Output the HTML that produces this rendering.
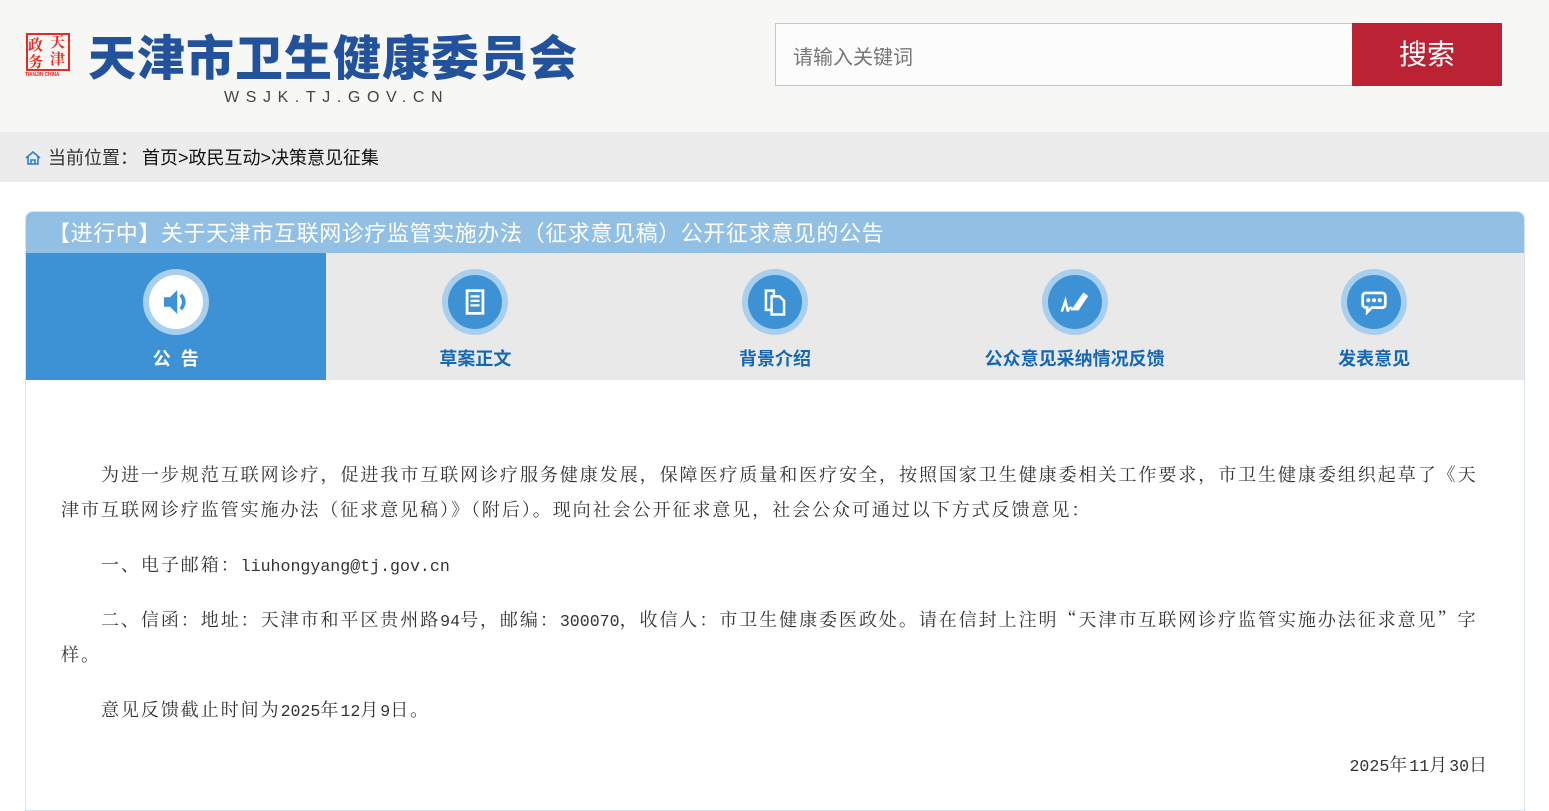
<!DOCTYPE html>
<html><head><meta charset="utf-8"><style>
*{margin:0;padding:0;box-sizing:border-box}
body{width:1549px;height:801px;overflow:hidden;background:#fff;font-family:"Liberation Sans","Noto Sans CJK SC",sans-serif;position:relative}
.hdr{position:absolute;left:0;top:0;width:1549px;height:132px;background:#f7f7f5}
.seal{position:absolute;left:26px;top:33px;width:44px;height:38px;border:2px solid #e52a1f;color:#e52a1f;font:bold 15px/16px "Noto Serif CJK SC",serif;overflow:hidden}
.seal i{position:absolute;font-style:normal}
.sealt{position:absolute;left:25px;top:72px;font:bold 5px "Liberation Sans",sans-serif;color:#e52a1f;letter-spacing:-0.2px}
.title{position:absolute;left:88px;top:26px;font:900 48px/56px "Noto Sans CJK SC",sans-serif;color:#22529c;letter-spacing:1px}
.url{position:absolute;left:224px;top:89px;font:16px "Liberation Sans",sans-serif;color:#444;letter-spacing:6.6px}
.search{position:absolute;left:775px;top:23px;width:578px;height:63px;border:1px solid #c8c8c8;background:#fcfcfc;font-size:20px;color:#777;padding:17px 0 0 17px}
.btn{position:absolute;left:1352px;top:23px;width:150px;height:63px;background:#bb2334;color:#fff;font-size:28px;text-align:center;line-height:63px}
.crumb{position:absolute;left:0;top:132px;width:1549px;height:50px;background:#ececec;font-size:18px;color:#333;line-height:52px;padding-left:48px}
.crumb b{font-weight:normal;color:#111;margin-left:4px}
.card{position:absolute;left:25px;top:211px;width:1500px;height:600px;border:1px solid #d6e4f0;border-radius:8px 8px 0 0;overflow:hidden}
.ct{height:41px;background:#92c0e5;color:#fff;font-size:22px;line-height:44px;padding-left:22px;letter-spacing:0.6px}
.tabs{display:flex;height:127px;background:#e9e9e9}
.tab{width:300px;text-align:center;position:relative}
.tab.a{background:#3d92d6}
.ic{position:absolute;left:50%;top:16px;margin-left:-33px;width:66px;height:66px;border-radius:50%;background:#a8cfee;display:flex;align-items:center;justify-content:center}
.ic span{width:54px;height:54px;border-radius:50%;background:#3d92d6;display:flex;align-items:center;justify-content:center}
.tab.a .ic span{background:#fff}
.tl{position:absolute;left:0;right:0;top:92px;font-weight:bold;font-size:18px;color:#1467b6}
.tab.a .tl{color:#fff;letter-spacing:10px;padding-left:10px}
.body{position:absolute;left:61px;top:457px;width:1430px;font-family:"Noto Serif CJK SC","Liberation Serif",serif;font-size:18px;line-height:35px;color:#333;white-space:nowrap;letter-spacing:1.95px}
.body p{text-indent:40px;margin-bottom:20px;height:auto}
.m{font-family:"Liberation Mono",monospace;font-size:16.6px;letter-spacing:0;line-height:1}
</style></head><body>
<div class="hdr">
<div class="seal"><i style="left:0;top:2px">政</i><i style="left:22px;top:-1px">天</i><i style="left:0;top:19px">务</i><i style="left:22px;top:16px">津</i></div>
<div class="sealt">TIANJIN·CHINA</div>
<div class="title">天津市卫生健康委员会</div>
<div class="url">WSJK.TJ.GOV.CN</div>
<div class="search">请输入关键词</div>
<div class="btn">搜索</div>
</div>
<div class="crumb"><svg width="16" height="14" viewBox="0 0 16 14" style="position:absolute;left:25px;top:19px"><path d="M1 7L8 1L15 7M3 6V13H13V6M6 13V9H10V13" fill="none" stroke="#2c7fcf" stroke-width="1.6"/></svg>当前位置：<b>首页&gt;政民互动&gt;决策意见征集</b></div>
<div class="card">
<div class="ct">【进行中】关于天津市互联网诊疗监管实施办法（征求意见稿）公开征求意见的公告</div>
<div class="tabs">
<div class="tab a"><div class="ic"><span><svg width="36" height="36" viewBox="0 0 30 30"><path d="M5 11H10L16 5V25L10 19H5Z" fill="#3d92d6"/><path d="M19 9Q24 15 19 21" stroke="#3d92d6" stroke-width="3" fill="none"/></svg></span></div><div class="tl">公告</div></div>
<div class="tab"><div class="ic"><span><svg width="34" height="34" viewBox="0 0 30 30"><rect x="8" y="5" width="14" height="20" fill="none" stroke="#fff" stroke-width="2.4"/><path d="M11 10H19M11 14H19M11 18H19" stroke="#fff" stroke-width="2"/></svg></span></div><div class="tl">草案正文</div></div>
<div class="tab"><div class="ic"><span><svg width="34" height="34" viewBox="0 0 30 30"><path d="M7 5H14V22H7Z" fill="none" stroke="#fff" stroke-width="2.2"/><path d="M12 10H19L23 14V26H12Z" fill="#3d92d6" stroke="#fff" stroke-width="2.2"/></svg></span></div><div class="tl">背景介绍</div></div>
<div class="tab"><div class="ic"><span><svg width="36" height="36" viewBox="0 0 30 30"><path d="M13 20L22 7L26 10L18 22L13 22Z" fill="#fff"/><path d="M4 23L7 14L9 23M9 23Q11 17 13 22" stroke="#fff" stroke-width="2" fill="none"/></svg></span></div><div class="tl">公众意见采纳情况反馈</div></div>
<div class="tab"><div class="ic"><span><svg width="34" height="34" viewBox="0 0 30 30"><path d="M8 7H22Q25 7 25 10V17Q25 20 22 20H13L9 24V20Q5 20 5 17V10Q5 7 8 7Z" fill="none" stroke="#fff" stroke-width="2.4"/><circle cx="10" cy="13.5" r="1.8" fill="#fff"/><circle cx="15" cy="13.5" r="1.8" fill="#fff"/><circle cx="20" cy="13.5" r="1.8" fill="#fff"/></svg></span></div><div class="tl">发表意见</div></div>
</div>
</div>
<div class="body">
<p>为进一步规范互联网诊疗，促进我市互联网诊疗服务健康发展，保障医疗质量和医疗安全，按照国家卫生健康委相关工作要求，市卫生健康委组织起草了《天<br>津市互联网诊疗监管实施办法（征求意见稿）》（附后）。现向社会公开征求意见，社会公众可通过以下方式反馈意见：</p>
<p>一、电子邮箱：<span class="m">liuhongyang@tj.gov.cn</span></p>
<p>二、信函：地址：天津市和平区贵州路<span class="m">94</span>号，邮编：<span class="m">300070</span>，收信人：市卫生健康委医政处。请在信封上注明“天津市互联网诊疗监管实施办法征求意见”字<br>样。</p>
<p>意见反馈截止时间为<span class="m">2025</span>年<span class="m">12</span>月<span class="m">9</span>日。</p>
<p style="text-align:right;text-indent:0;padding-right:2px"><span class="m">2025</span>年<span class="m">11</span>月<span class="m">30</span>日</p>
</div>
</body></html>
